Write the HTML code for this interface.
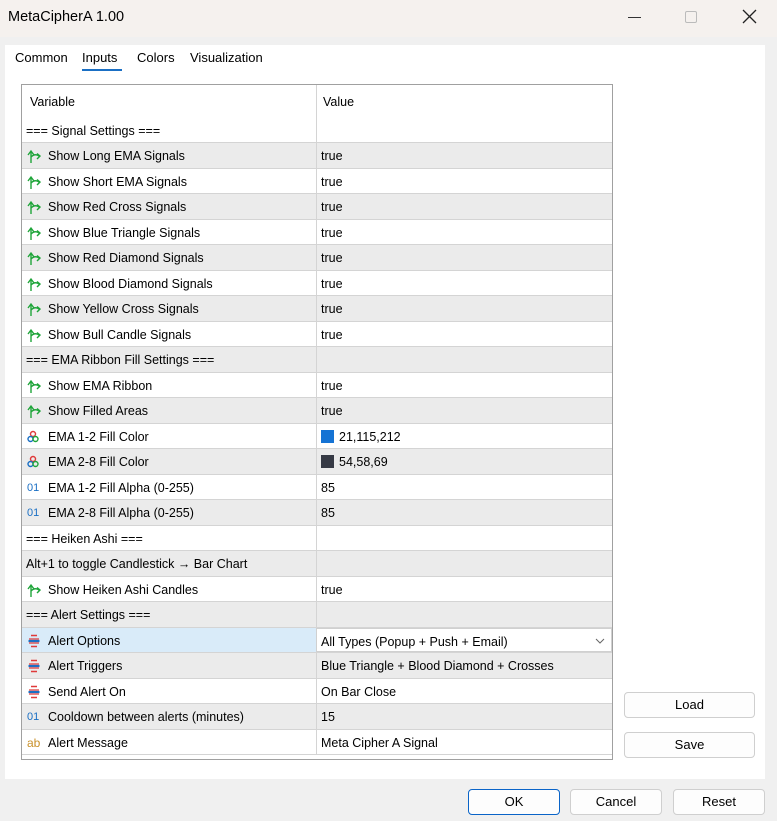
<!DOCTYPE html>
<html><head><meta charset="utf-8"><style>
*{margin:0;padding:0;box-sizing:border-box}
body{width:777px;height:821px;background:#f0f0f0;font-family:"Liberation Sans",sans-serif;font-size:12.5px;color:#000;position:relative;overflow:hidden}
.title{position:absolute;left:0;top:0;width:777px;height:37px;background:#f5f1ee}
.title .t{position:absolute;left:8px;top:9px;font-size:14.5px}
.panel{position:absolute;left:5px;top:45px;width:760px;height:734px;background:#fff}
.tab{position:absolute;top:50px;font-size:13px}
.tbl{position:absolute;left:21px;top:84px;width:592px;height:676px;border:1px solid #a0a0a0;background:#fff;overflow:hidden}
.row{position:absolute;left:0;width:590px;height:25.5px;border-bottom:1px solid #d4d4d4}
.row.g{background:#ebebeb}
.row .n{position:absolute;left:6px;top:6px;white-space:nowrap;line-height:14px}
.row .v{position:absolute;left:294px;top:0;height:100%;border-left:1px solid #d4d4d4;width:296px;padding:6px 0 0 4px;white-space:nowrap;line-height:14px}
.ic{display:inline-block;width:21px;vertical-align:top}
.btn{position:absolute;height:26px;border:1px solid #cfcfcf;border-radius:4px;background:#fdfdfd;text-align:center;line-height:24px;font-size:13px}
.sw{display:inline-block;width:13px;height:13px;vertical-align:-2px;margin-right:5px}
</style></head><body>
<div class="title"><span class="t">MetaCipherA 1.00</span>
<div style="position:absolute;left:628px;top:17px;width:13px;height:1px;background:#333"></div>
<div style="position:absolute;left:685px;top:11px;width:12px;height:12px;border:1px solid #bbb;border-radius:2px"></div>
<svg style="position:absolute;left:742px;top:9px" width="15" height="15"><path d="M1 1L14 14M14 1L1 14" stroke="#222" stroke-width="1.3"/></svg>
</div>
<div class="panel"></div>
<span class="tab" style="left:15px">Common</span>
<span class="tab" style="left:82px">Inputs</span>
<div style="position:absolute;left:82px;top:69px;width:40px;height:2px;background:#1a6fc4"></div>
<span class="tab" style="left:137px">Colors</span>
<span class="tab" style="left:190px">Visualization</span>
<div class="tbl">
<div style="position:absolute;left:8px;top:10px">Variable</div>
<div style="position:absolute;left:294px;top:0;height:33px;border-left:1px solid #d4d4d4;padding:10px 0 0 6px">Value</div>
<div id="rows"></div>
</div>
<div class="btn" style="left:624px;top:692px;width:131px">Load</div>
<div class="btn" style="left:624px;top:732px;width:131px">Save</div>
<div class="btn" style="left:468px;top:789px;width:92px;border:1px solid #0a64c8">OK</div>
<div class="btn" style="left:570px;top:789px;width:92px">Cancel</div>
<div class="btn" style="left:673px;top:789px;width:92px">Reset</div>
<script>
const B='<svg class="ic" width="21" height="14" viewBox="0 0 21 14"><path d="M4 14V3M1 6L4 2L7 6M4 8Q8 4 12 7M10 4.5L13 7L10 10" fill="none" stroke="#1fa53a" stroke-width="1.4"/></svg>';
const C='<svg class="ic" width="21" height="14" viewBox="0 0 21 14"><circle cx="6" cy="4" r="2.5" fill="none" stroke="#e03a3a" stroke-width="1.4"/><circle cx="3.5" cy="9" r="2.5" fill="none" stroke="#1a6fc4" stroke-width="1.4"/><circle cx="8.5" cy="9" r="2.5" fill="none" stroke="#1fa53a" stroke-width="1.4"/></svg>';
const N='<span class="ic" style="color:#1a6fc4;font-size:11px">01</span>';
const E='<svg class="ic" width="21" height="14" viewBox="0 0 21 14"><path d="M4 1.5H10M4 12.5H10" stroke="#e03a3a" stroke-width="1.4"/><path d="M2 5H12M2 9H12" stroke="#e03a3a" stroke-width="1.3"/><path d="M1.5 7H12.5" stroke="#1a6fc4" stroke-width="2.2"/></svg>';
const S='<span class="ic" style="color:#c9912a;font-size:12px">ab</span>';
const sw=c=>'<span class="sw" style="background:'+c+'"></span>';
const R=[
['','=== Signal Settings ===',''],
[B,'Show Long EMA Signals','true'],[B,'Show Short EMA Signals','true'],[B,'Show Red Cross Signals','true'],[B,'Show Blue Triangle Signals','true'],[B,'Show Red Diamond Signals','true'],[B,'Show Blood Diamond Signals','true'],[B,'Show Yellow Cross Signals','true'],[B,'Show Bull Candle Signals','true'],
['','=== EMA Ribbon Fill Settings ===',''],
[B,'Show EMA Ribbon','true'],[B,'Show Filled Areas','true'],
[C,'EMA 1-2 Fill Color',sw('#1573d4')+'21,115,212'],[C,'EMA 2-8 Fill Color',sw('#363a45')+'54,58,69'],
[N,'EMA 1-2 Fill Alpha (0-255)','85'],[N,'EMA 2-8 Fill Alpha (0-255)','85'],
['','=== Heiken Ashi ===',''],['','Alt+1 to toggle Candlestick → Bar Chart',''],
[B,'Show Heiken Ashi Candles','true'],['','=== Alert Settings ===',''],
[E,'Alert Options','SEL'],[E,'Alert Triggers','Blue Triangle + Blood Diamond + Crosses'],[E,'Send Alert On','On Bar Close'],
[N,'Cooldown between alerts (minutes)','15'],[S,'Alert Message','Meta Cipher A Signal']];
let h='';
R.forEach((r,i)=>{
 const top=32.5+i*25.5;
 let cls='row'+(i%2?' g':'');
 let st='top:'+top+'px;';
 if(i==20) st+='background:#d9ebf9;';
 let v=r[2];
 let vs='';
 if(v=='SEL'){v='All Types (Popup + Push + Email)<svg style="position:absolute;right:6px;top:9px" width="10" height="6"><path d="M1 1L5 5L9 1" fill="none" stroke="#666"/></svg>';vs='background:#fff;border:1px solid #d0d0d0;';}
 h+='<div class="'+cls+'" style="'+st+'"><div class="n" style="'+(r[0]?'left:5px':'left:4px')+'">'+r[0]+r[1]+'</div><div class="v" style="'+vs+'">'+v+'</div></div>';
});
document.getElementById('rows').innerHTML=h;
</script>
</body></html>
